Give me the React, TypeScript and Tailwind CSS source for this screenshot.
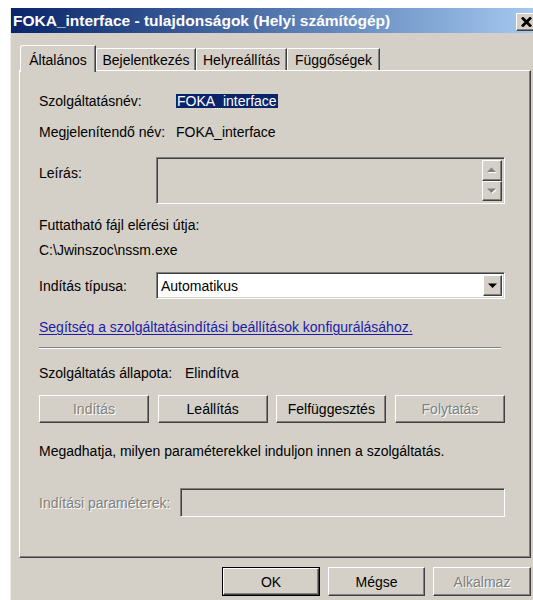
import type { ReactNode } from "react"

// Win2000-style bevels
const raised =
  "border border-t-white border-l-white border-r-[#404040] border-b-[#404040] shadow-[inset_-1px_-1px_0_#808080]"
const sunken =
  "border border-t-[#808080] border-l-[#808080] border-r-white border-b-white shadow-[inset_1px_1px_0_#404040,inset_-1px_-1px_0_#d4d0c8]"
const disabledText = "text-[#808080] [text-shadow:1px_1px_0_#ffffff]"

function Button({
  children,
  disabled,
  isDefault,
  className = "",
}: {
  children: ReactNode
  disabled?: boolean
  isDefault?: boolean
  className?: string
}) {
  const face = (
    <div
      className={`flex h-full w-full items-center justify-center bg-[#d4d0c8] ${raised} ${
        disabled ? disabledText : "text-black"
      }`}
    >
      {children}
    </div>
  )
  if (isDefault) {
    return <div className={`border border-black ${className}`}>{face}</div>
  }
  return <div className={className}>{face}</div>
}

function Arrow({ dir, muted }: { dir: "up" | "down"; muted?: boolean }) {
  const pts = dir === "up" ? "0,5 4.5,0.5 9,5" : "0,0.5 9,0.5 4.5,5"
  return (
    <svg width="10" height="6" viewBox="0 0 10 6" className="overflow-visible">
      {muted && <polygon points={pts} fill="#ffffff" transform="translate(1,1)" />}
      <polygon points={pts} fill={muted ? "#808080" : "#000000"} />
    </svg>
  )
}

function ScrollButton({ dir }: { dir: "up" | "down" }) {
  return (
    <div className={`flex h-[21px] w-[20px] items-center justify-center bg-[#d4d0c8] ${raised}`}>
      <Arrow dir={dir} muted />
    </div>
  )
}

const tabs = ["Bejelentkezés", "Helyreállítás", "Függőségek"]
const tabWidths = ["w-[100px]", "w-[91px]", "w-[93px]"]

export default function App() {
  return (
    <div className="h-[600px] w-[533px] overflow-hidden bg-white pl-[10px] pt-[8px] font-['Liberation_Sans',Arial,sans-serif] text-[14px] leading-[20px] text-black">
      <div className="flex h-[600px] w-[527px] flex-col border-l border-l-[#ecebe6] bg-[#d4d0c8]">
        {/* title bar */}
        <div className="flex h-[25px] items-start bg-gradient-to-r from-[#0a246a] to-[#a6caf0] pl-[2px] pr-[1px]">
          <span className="mt-[2px] flex-1 whitespace-nowrap text-[15.5px] font-bold leading-[21px] text-white">
            FOKA_interface - tulajdonságok (Helyi számítógép)
          </span>
          <div className={`mt-[5px] flex h-[18px] w-[20px] items-center justify-center bg-[#d4d0c8] ${raised}`}>
            <svg width="11" height="10" viewBox="0 0 11 10">
              <path d="M1 0.5 L10 9.5 M10 0.5 L1 9.5" stroke="#000" strokeWidth="2.8" />
            </svg>
          </div>
        </div>

        {/* tab strip */}
        <div className="mt-[12px] flex h-[25px] items-end pl-[9px]">
          <div className="relative z-10 -mb-[2px] flex h-[27px] w-[76px] items-start justify-center rounded-tl-[3px] border-l border-t border-r border-l-white border-t-white border-r-[#404040] bg-[#d4d0c8] pt-[4px] shadow-[inset_-1px_0_0_#808080]">
            Általános
          </div>
          {tabs.map((t, i) => (
            <div
              key={t}
              className={`flex h-[22px] ${tabWidths[i]} items-start justify-center rounded-tl-[2px] border-l border-t border-r border-l-white border-t-white border-r-[#404040] pt-[1px] shadow-[inset_-1px_0_0_#808080]`}
            >
              {t}
            </div>
          ))}
        </div>

        {/* tab page */}
        <div className="ml-[8px] flex h-[488px] w-[512px] flex-col border border-t-white border-l-white border-r-[#404040] border-b-[#404040] pl-[19px] pr-[25px] shadow-[inset_-1px_-1px_0_#808080]">
          <div className="mt-[20px] flex h-[20px] items-center">
            <span className="w-[137px]">Szolgáltatásnév:</span>
            <span className="bg-[#0a246a] px-[1px] leading-[14px] text-white outline-1 outline-dotted outline-[#d4d0c8]">
              FOKA_interface
            </span>
          </div>
          <div className="mt-[11px] flex h-[20px] items-center">
            <span className="w-[137px]">Megjelenítendő név:</span>
            <span>FOKA_interface</span>
          </div>

          <div className="mt-[15px] flex h-[47px]">
            <span className="mt-[6px] w-[117px]">Leírás:</span>
            <div className={`flex flex-1 justify-end bg-[#d4d0c8] p-[2px] ${sunken}`}>
              <div className="flex w-[20px] flex-col">
                <ScrollButton dir="up" />
                <div className="h-[1px] flex-1 bg-[#e9e7e3]" />
                <ScrollButton dir="down" />
              </div>
            </div>
          </div>

          <div className="mt-[11px] flex h-[20px] items-center">Futtatható fájl elérési útja:</div>
          <div className="mt-[5px] flex h-[20px] items-center">C:\Jwinszoc\nssm.exe</div>

          <div className="mt-[12px] flex h-[27px] items-center">
            <span className="w-[117px]">Indítás típusa:</span>
            <div className={`flex h-full flex-1 items-center bg-white p-[2px] ${sunken}`}>
              <span className="flex-1 pl-[2px]">Automatikus</span>
              <div className={`flex h-full w-[19px] items-center justify-center bg-[#d4d0c8] ${raised}`}>
                <Arrow dir="down" />
              </div>
            </div>
          </div>

          <div className="mt-[18px] flex h-[20px] items-center">
            <span className="text-[#1c1ca8] underline underline-offset-[2px]">
              Segítség a szolgáltatásindítási beállítások konfigurálásához.
            </span>
          </div>

          <div className="mr-[4px] mt-[10px] h-[2px] border-t border-b border-t-[#808080] border-b-white" />

          <div className="mt-[14px] flex h-[20px] items-center">
            <span className="w-[146px]">Szolgáltatás állapota:</span>
            <span>Elindítva</span>
          </div>

          <div className="mt-[12px] flex h-[28px] justify-between">
            <Button disabled className="h-full w-[110px]">Indítás</Button>
            <Button className="h-full w-[110px]">Leállítás</Button>
            <Button className="h-full w-[110px]">Felfüggesztés</Button>
            <Button disabled className="h-full w-[110px]">Folytatás</Button>
          </div>

          <div className="mt-[18px] flex h-[20px] items-center">
            Megadhatja, milyen paraméterekkel induljon innen a szolgáltatás.
          </div>

          <div className="mt-[27px] flex h-[29px] items-center">
            <span className={`w-[141px] ${disabledText}`}>Indítási paraméterek:</span>
            <div className={`h-full flex-1 bg-[#d4d0c8] ${sunken}`} />
          </div>
        </div>

        {/* dialog buttons */}
        <div className="ml-[211px] mt-[9px] flex h-[29px] gap-[8px]">
          <Button isDefault className="h-full w-[98px]">OK</Button>
          <Button className="h-full w-[97px]">Mégse</Button>
          <Button disabled className="h-full w-[98px]">Alkalmaz</Button>
        </div>
      </div>
    </div>
  )
}
